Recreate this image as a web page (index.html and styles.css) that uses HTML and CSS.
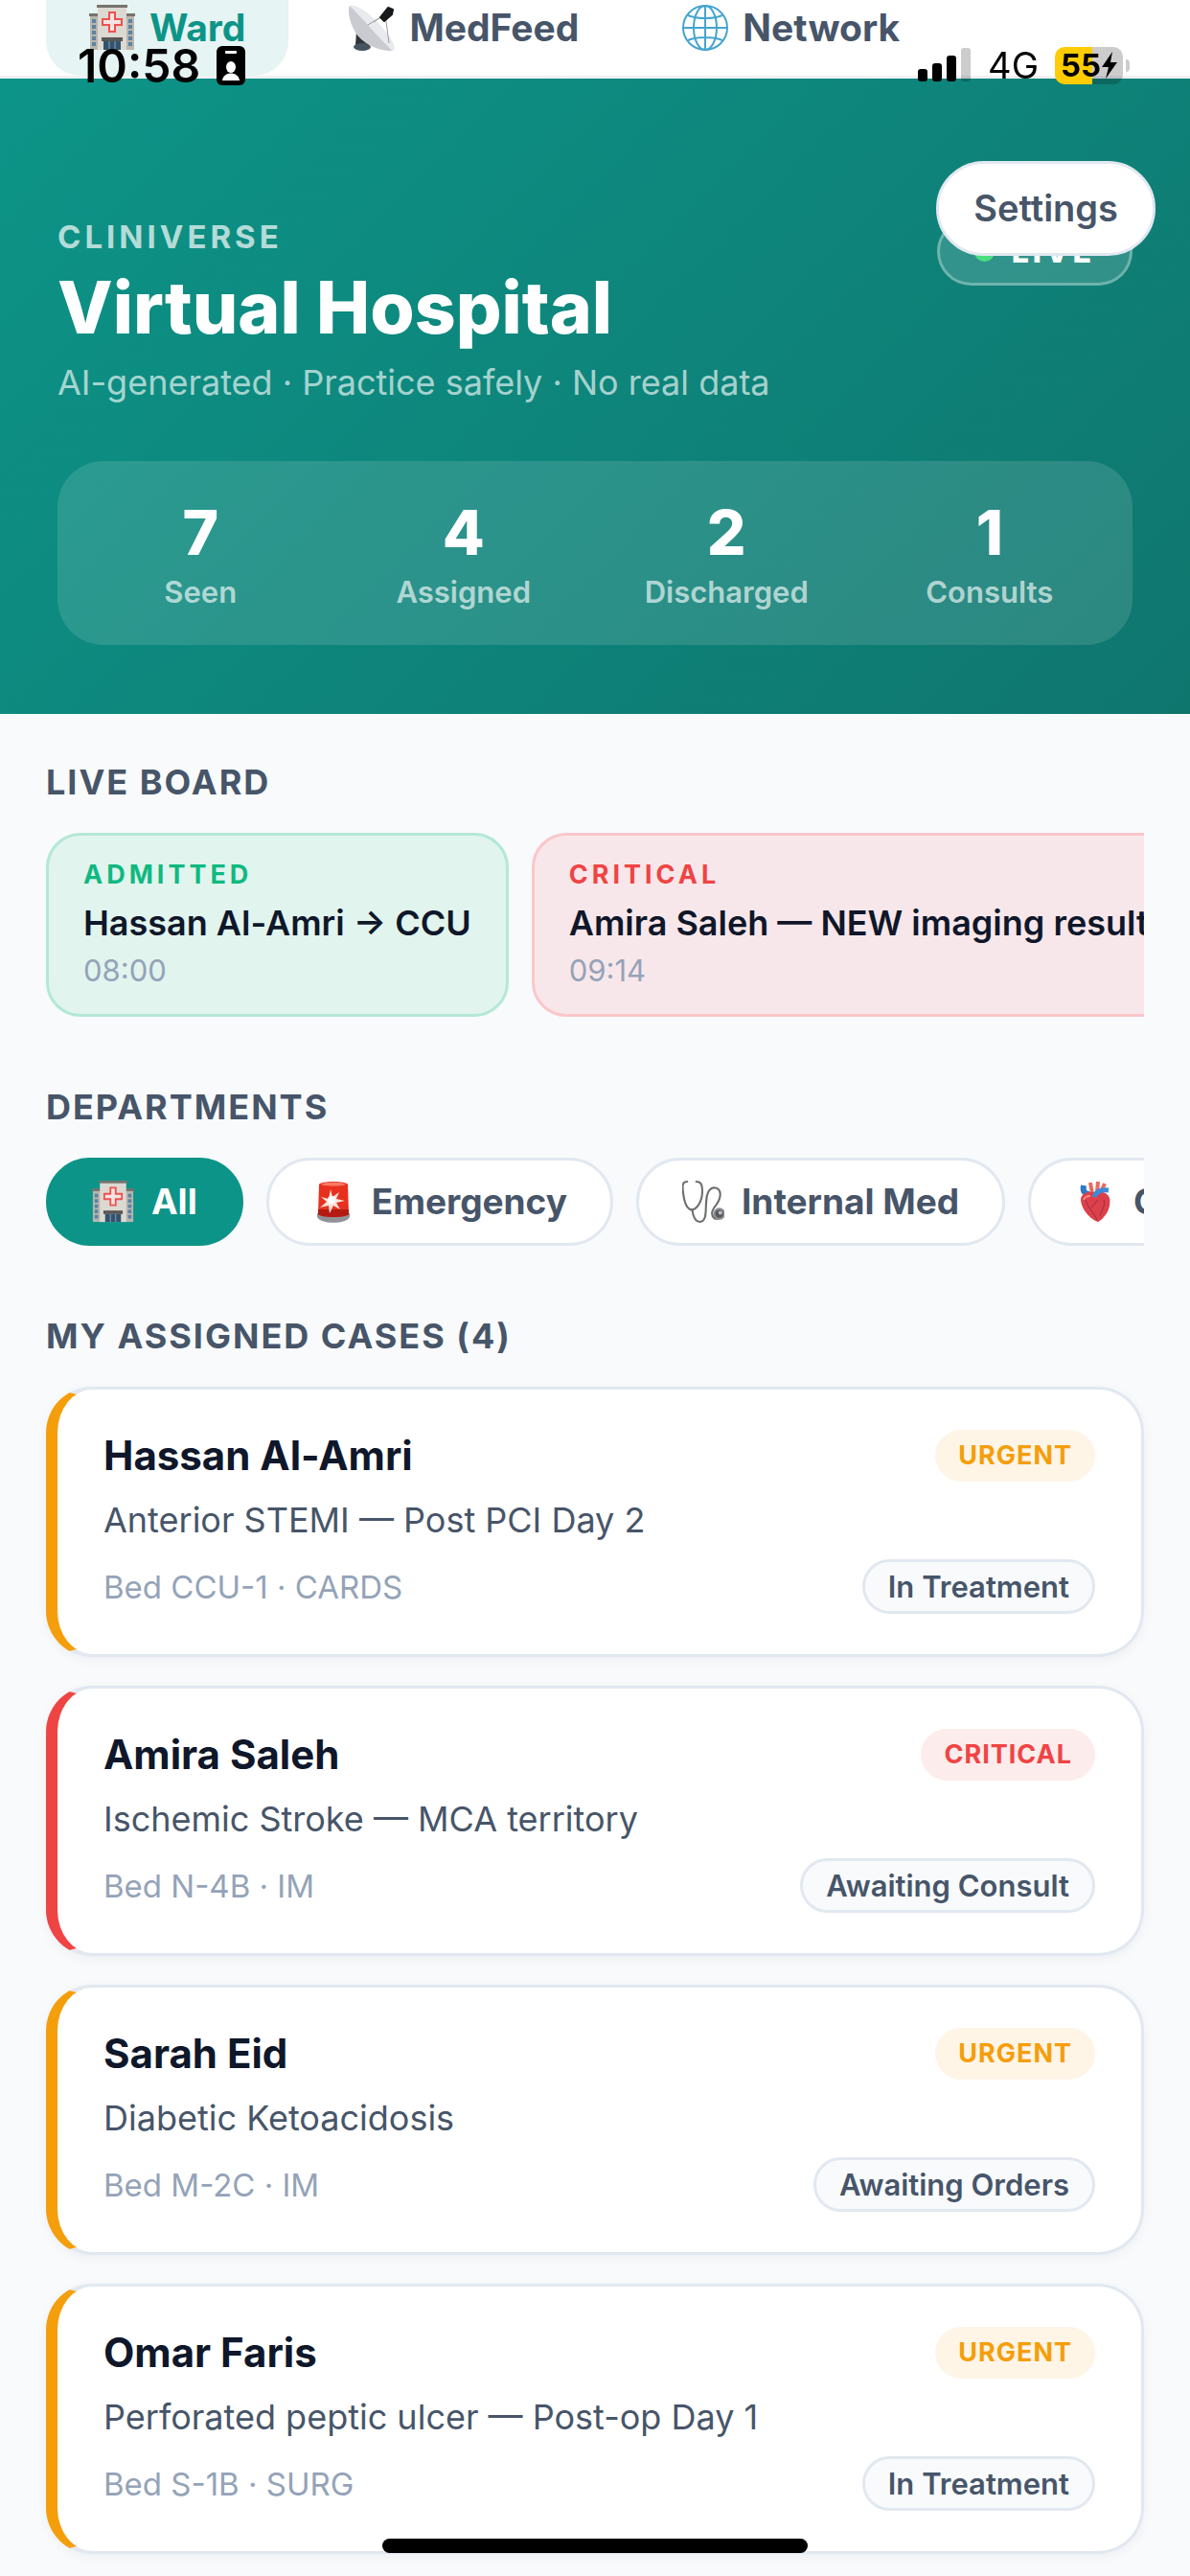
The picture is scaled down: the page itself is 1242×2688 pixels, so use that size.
FILE: index.html
```html
<!DOCTYPE html>
<html lang="en">

<head>
  <meta charset="utf-8">
  <meta name="viewport" content="width=device-width, initial-scale=1">
  <title>CliniVerse - Virtual Hospital</title>
  <link rel="stylesheet" href="styles.css">
</head>

<body>
  <!-- shared icons -->
  <svg class="sprite" aria-hidden="true">
    <symbol id="hospital" viewBox="0 0 48 48">
      <rect x="1" y="10" width="46" height="37" fill="#b9b6ae" />
      <rect x="0" y="9" width="48" height="3" fill="#77736f" />
      <rect x="9" y="1" width="30" height="46" fill="#dcd9d2" />
      <rect x="8" y="0" width="32" height="3" fill="#77736f" />
      <path d="M3 15h4v4H3zM3 21h4v4H3zM3 27h4v4H3zM3 33h4v4H3zM3 39h4v4H3zM41 15h4v4h-4zM41 21h4v4h-4zM41 27h4v4h-4zM41 33h4v4h-4zM41 39h4v4h-4z" fill="#5b83a3" />
      <path d="M21 8h6v7h7v6h-7v7h-6v-7h-7v-6h7z" fill="#f3e4e1" stroke="#f0504f" stroke-width="2" />
      <rect x="13" y="34" width="22" height="4" fill="#5a5654" />
      <path d="M15 38h18v9H15z" fill="#33526d" />
      <path d="M21 38v9M27 38v9" stroke="#8ba7bd" stroke-width="1" />
    </symbol>
  </svg>

  <div class="status-bar">
    <div class="status-left">
      <span class="clock">10:58</span>
      <svg width="30" height="41" viewBox="0 0 30 41">
        <rect width="30" height="41" rx="6" />
        <rect x="9" y="5" width="12" height="3" rx="1" fill="#fff" />
        <ellipse cx="15" cy="22" rx="5" ry="6" fill="#fff" />
        <path d="M6 36c1-10 17-10 18 0z" fill="#fff" />
      </svg>
    </div>
    <div class="status-right">
      <svg width="56" height="36" viewBox="0 0 56 36">
        <rect x="0" y="22" width="10" height="13" rx="3" />
        <rect x="15" y="16" width="10" height="19" rx="3" />
        <rect x="30" y="8" width="10" height="27" rx="3" />
        <rect x="45" y="0" width="10" height="35" rx="3" fill="#000" opacity=".2" />
      </svg>
      <span class="carrier">4G</span>
      <div class="battery">
        <span class="battery-level">55</span>
        <svg width="18" height="28" viewBox="0 0 18 28">
          <path d="M12 0L1 16h7L5 28l12-17h-7z" />
        </svg>
      </div>
    </div>
  </div>

  <nav class="tabs">
    <a class="tab active" href="#ward">
      <svg class="icon-lg"><use href="#hospital" /></svg>
      Ward
    </a>
    <a class="tab" href="#medfeed">
      <svg class="icon-lg" viewBox="0 0 48 48">
        <path d="M8 28l10 1 3 13H7z" fill="#2f3437" />
        <ellipse cx="14" cy="44" rx="9" ry="4" fill="#46545f" />
        <path d="M1 1C9-2 30 16 42 33c6 9 7 14 3 15C34 49 14 41 7 29 1 19-2 5 1 1z" fill="#c9cbd0" />
        <path d="M1 1C9-2 30 16 42 33c6 9 7 14 3 15C38 40 30 33 20 21 12 12 5 5 1 1z" fill="#e9eaee" />
        <path d="M20 21L38 10l4 30M38 10L26 18" fill="none" stroke="#9a9da3" stroke-width="1" />
        <path d="M41 3l5 2-1 5-8 7-4-4z" fill="#17191b" stroke="#17191b" stroke-width="2" stroke-linejoin="round" />
      </svg>
      MedFeed
    </a>
    <a class="tab" href="#network">
      <svg class="icon-lg" viewBox="0 0 48 48" fill="none" stroke="#45a5cf" stroke-width="2">
        <circle cx="24" cy="24" r="23" />
        <ellipse cx="24" cy="24" rx="12" ry="23" />
        <path d="M24 1v46M1 24h46M6 11c9 4 27 4 36 0M6 37c9-4 27-4 36 0" />
      </svg>
      Network
    </a>
  </nav>

  <header class="hero">
    <div class="hero-top">
      <div class="hero-text">
        <div class="brand">CLINIVERSE</div>
        <h1>Virtual Hospital</h1>
        <p class="tagline">AI-generated · Practice safely · No real data</p>
      </div>
      <div class="live"><span class="dot"></span>LIVE</div>
    </div>
    <button class="settings" type="button">Settings</button>

    <div class="stats">
      <div class="stat"><b>7</b><span>Seen</span></div>
      <div class="stat"><b>4</b><span>Assigned</span></div>
      <div class="stat"><b>2</b><span>Discharged</span></div>
      <div class="stat"><b>1</b><span>Consults</span></div>
    </div>
  </header>

  <main>
    <section>
      <h2>LIVE BOARD</h2>
      <div class="scroller">
        <article class="event admitted">
          <div class="event-type">ADMITTED</div>
          <div class="event-title">Hassan Al-Amri → CCU</div>
          <time class="event-time">08:00</time>
        </article>
        <article class="event critical">
          <div class="event-type">CRITICAL</div>
          <div class="event-title">Amira Saleh — NEW imaging results</div>
          <time class="event-time">09:14</time>
        </article>
      </div>
    </section>

    <section>
      <h2>DEPARTMENTS</h2>
      <div class="scroller">
        <button class="dept active" type="button">
          <svg class="icon"><use href="#hospital" /></svg>
          All
        </button>
        <button class="dept" type="button">
          <svg class="icon" viewBox="0 0 44 44">
            <path d="M5 37c0 9 34 9 34 0v-3H5z" fill="#8f9296" />
            <path d="M7 4c1-4 29-4 30 0l1 31c-3 4-29 4-32 0z" fill="#e8301f" />
            <path d="M6 30h32v5c-3 4-29 4-32 0z" fill="#b51a12" />
            <path d="M9 4c2-3 24-3 26 0-4 2-22 2-26 0z" fill="#f77a66" />
            <path d="M19 9l2 8 7-5-3 7 9 2-9 2 4 7-7-4-4 8-1-8-9 2 7-6-6-5 8 2z" fill="#ffe3dc" />
            <circle cx="20" cy="20" r="4" fill="#fff" />
          </svg>
          Emergency
        </button>
        <button class="dept" type="button">
          <svg class="icon" viewBox="0 0 42 42" fill="none" stroke="#6d6e70" stroke-width="2" stroke-linecap="round">
            <path d="M5 1C0 1 0 5 1 12c1 9 4 16 8 17 6 0 11-9 11-18 0-7-1-10-6-10" />
            <path d="M10 29c1 8 4 12 8 12 7-1 5-12 6-20 0-8 3-14 8-14 8 1 7 10 2 17-5 6-6 11-1 14h3" />
            <circle cx="37" cy="33" r="5" fill="#55585b" stroke="#8a8c8f" />
            <circle cx="38" cy="32" r="2" fill="#b9bcc0" stroke="none" />
          </svg>
          Internal Med
        </button>
        <button class="dept" type="button">
          <svg class="icon" viewBox="0 0 44 44">
            <path d="M19 14L17 2M24 12l1-11M28 12l4-9" stroke="#ea6a62" stroke-width="4" />
            <path d="M16 14c-6 0-7-4-6-9" fill="none" stroke="#2f79c4" stroke-width="6" />
            <path d="M7 19c1-6 8-8 13-7 7-2 15 0 17 6 2 9-3 20-12 25C16 40 7 29 7 19z" fill="#dd4049" />
            <path d="M21 17c2-6 7-8 15-7" fill="none" stroke="#3c8bd6" stroke-width="5" />
            <path d="M12 20c2 8 6 9 12 21M18 28l7-8M31 20c2 6-2 10-4 17" fill="none" stroke="#92304a" stroke-width="1" />
            <path d="M10 20c1-3 4-4 7-4" fill="none" stroke="#f58d88" stroke-width="2" />
          </svg>
          Cardiology
        </button>
      </div>
    </section>

    <section>
      <h2>MY ASSIGNED CASES (4)</h2>
      <div class="cases">
        <article class="case urgent">
          <div class="case-row">
            <h3>Hassan Al-Amri</h3>
            <span class="priority">URGENT</span>
          </div>
          <p class="diagnosis">Anterior STEMI — Post PCI Day 2</p>
          <div class="case-row">
            <span class="bed">Bed CCU-1 · CARDS</span>
            <span class="state">In Treatment</span>
          </div>
        </article>
        <article class="case critical">
          <div class="case-row">
            <h3>Amira Saleh</h3>
            <span class="priority">CRITICAL</span>
          </div>
          <p class="diagnosis">Ischemic Stroke — MCA territory</p>
          <div class="case-row">
            <span class="bed">Bed N-4B · IM</span>
            <span class="state">Awaiting Consult</span>
          </div>
        </article>
        <article class="case urgent">
          <div class="case-row">
            <h3>Sarah Eid</h3>
            <span class="priority">URGENT</span>
          </div>
          <p class="diagnosis">Diabetic Ketoacidosis</p>
          <div class="case-row">
            <span class="bed">Bed M-2C · IM</span>
            <span class="state">Awaiting Orders</span>
          </div>
        </article>
        <article class="case urgent">
          <div class="case-row">
            <h3>Omar Faris</h3>
            <span class="priority">URGENT</span>
          </div>
          <p class="diagnosis">Perforated peptic ulcer — Post-op Day 1</p>
          <div class="case-row">
            <span class="bed">Bed S-1B · SURG</span>
            <span class="state">In Treatment</span>
          </div>
        </article>
      </div>
    </section>
  </main>

  <div class="home-indicator"></div>
</body>

</html>
```

FILE: styles.css
```css
* {
  box-sizing: border-box;
}

body {
  margin: 0;
  font-family: Inter, "Liberation Sans", sans-serif;
  font-size: 36px;
  color: #0f172a;
  background: #f8fafc;
}

h1,
h2,
h3,
p {
  margin: 0;
}

button {
  font-family: inherit;
  cursor: pointer;
}

.sprite {
  position: absolute;
  width: 0;
  height: 0;
}

.icon-lg {
  width: 48px;
  height: 48px;
}

.icon {
  width: 44px;
  height: 44px;
}

/* phone status bar, lies over the page */
.status-bar {
  position: fixed;
  top: 40px;
  left: 0;
  right: 0;
  z-index: 10;
  display: flex;
  justify-content: space-between;
  align-items: center;
  height: 56px;
  padding: 0 70px 0 81px;
  color: #000;
}

.status-left,
.status-right {
  display: flex;
  align-items: center;
  gap: 17px;
}

.clock {
  font-size: 48px;
  font-weight: 600;
}

.carrier {
  font-size: 38px;
}

.battery {
  position: relative;
  display: flex;
  align-items: center;
  width: 71px;
  height: 39px;
  padding-left: 6px;
  border-radius: 10px;
  background: linear-gradient(90deg, #fc0 55%, rgba(0, 0, 0, 0.2) 55%);
}

.battery::after {
  content: "";
  position: absolute;
  left: 74px;
  top: 13px;
  width: 4px;
  height: 13px;
  border-radius: 0 4px 4px 0;
  background: rgba(0, 0, 0, 0.2);
}

.battery-level {
  font-size: 33px;
  font-weight: 700;
}

/* top tabs */
.tabs {
  display: flex;
  gap: 18px;
  padding: 0 48px;
  background: #fff;
  border-bottom: 3px solid #eef0f4;
}

.tab {
  display: flex;
  align-items: center;
  gap: 15px;
  padding: 5px 45px 26px;
  border-radius: 0 0 36px 36px;
  font-size: 39px;
  font-weight: 700;
  line-height: 48px;
  color: #475569;
  text-decoration: none;
}

.tab.active {
  color: #0d9488;
  background: #e6f4f3;
}

/* header */
.hero {
  position: relative;
  padding: 138px 60px 72px;
  color: #fff;
  background: linear-gradient(135deg, #0d9488, #0f766e);
}

.hero-top {
  display: flex;
  justify-content: space-between;
  align-items: flex-start;
}

.brand {
  padding-top: 6px;
  font-size: 33px;
  font-weight: 700;
  line-height: 42px;
  letter-spacing: 4px;
  color: rgba(255, 255, 255, 0.7);
}

h1 {
  margin-top: 8px;
  font-size: 75px;
  font-weight: 800;
  line-height: 90px;
}

.tagline {
  margin-top: 9px;
  line-height: 48px;
  color: rgba(255, 255, 255, 0.65);
}

.live {
  display: flex;
  align-items: center;
  gap: 18px;
  margin-top: 7px;
  padding: 12px 36px;
  border: 3px solid rgba(255, 255, 255, 0.3);
  border-radius: 36px;
  font-size: 32px;
  font-weight: 800;
  line-height: 41px;
  letter-spacing: 4px;
  background: rgba(255, 255, 255, 0.15);
}

.dot {
  width: 21px;
  height: 21px;
  border-radius: 50%;
  background: #4ade80;
}

.settings {
  position: absolute;
  top: 86px;
  right: 36px;
  padding: 24px 36px;
  border: 3px solid #e2e8f0;
  border-radius: 50px;
  font-size: 38px;
  font-weight: 600;
  line-height: 45px;
  color: #475569;
  background: #fff;
}

.stats {
  display: grid;
  grid-template-columns: repeat(4, 1fr);
  margin-top: 58px;
  padding: 36px 12px 34px;
  border-radius: 48px;
  background: rgba(255, 255, 255, 0.12);
}

.stat {
  text-align: center;
}

.stat b {
  display: block;
  font-size: 64px;
  font-weight: 800;
  line-height: 78px;
}

.stat span {
  display: block;
  margin-top: 2px;
  font-size: 31px;
  font-weight: 600;
  line-height: 42px;
  color: rgba(255, 255, 255, 0.65);
}

/* sections */
main {
  padding: 49px 48px 24px;
}

section {
  margin-bottom: 72px;
}

section:last-child {
  margin-bottom: 0;
}

h2 {
  margin-bottom: 30px;
  font-size: 36px;
  font-weight: 700;
  line-height: 45px;
  letter-spacing: 2px;
  color: #475569;
}

.scroller {
  display: flex;
  gap: 24px;
  overflow: hidden;
}

.event {
  flex: none;
  padding: 24px 36px;
  border: 3px solid;
  border-radius: 36px;
}

.event.admitted {
  border-color: #b4e8d6;
  background: #e1f4ee;
}

.event.critical {
  border-color: #fbc6ca;
  background: #f8e7ea;
}

.event-type {
  font-size: 27px;
  font-weight: 700;
  line-height: 33px;
  letter-spacing: 4px;
}

.admitted .event-type {
  color: #10b981;
}

.critical .event-type {
  color: #ef4444;
}

.event-title {
  margin: 12px 0 6px;
  font-weight: 600;
  line-height: 45px;
}

.event-time {
  display: block;
  font-size: 31px;
  line-height: 42px;
  color: #94a3b8;
}

.dept {
  display: flex;
  flex: none;
  align-items: center;
  gap: 18px;
  padding: 21px 45px;
  border: 3px solid #e2e8f0;
  border-radius: 48px;
  font-size: 37px;
  font-weight: 700;
  line-height: 42px;
  color: #475569;
  background: #fff;
}

.dept.active {
  border-color: #0d9488;
  color: #fff;
  background: #0d9488;
}

/* case cards */
.cases {
  display: grid;
  gap: 30px;
}

.case {
  padding: 42px 48px;
  border: 3px solid #e2e8f0;
  border-left-width: 12px;
  border-radius: 48px;
  background: #fff;
  box-shadow: 0 3px 12px rgba(15, 23, 42, 0.05);
}

.case.urgent {
  border-left-color: #f59e0b;
}

.case.critical {
  border-left-color: #ef4444;
}

.case-row {
  display: flex;
  justify-content: space-between;
  align-items: center;
}

h3 {
  font-size: 42px;
  font-weight: 700;
  line-height: 54px;
}

.priority {
  padding: 9px 24px;
  border-radius: 27px;
  font-size: 27px;
  font-weight: 700;
  line-height: 36px;
  letter-spacing: 1px;
}

.urgent .priority {
  color: #f59e0b;
  background: #fef5e7;
}

.critical .priority {
  color: #ef4444;
  background: #fdecec;
}

.diagnosis {
  margin: 18px 0;
  line-height: 45px;
  color: #475569;
}

.bed {
  font-size: 33px;
  color: #94a3b8;
}

.state {
  padding: 6px 24px;
  border: 3px solid #e2e8f0;
  border-radius: 30px;
  font-size: 31px;
  font-weight: 600;
  line-height: 39px;
  color: #475569;
  background: #f8fafc;
}

.home-indicator {
  position: fixed;
  left: 50%;
  bottom: 24px;
  width: 444px;
  height: 15px;
  margin-left: -222px;
  border-radius: 8px;
  background: #000;
}
```
